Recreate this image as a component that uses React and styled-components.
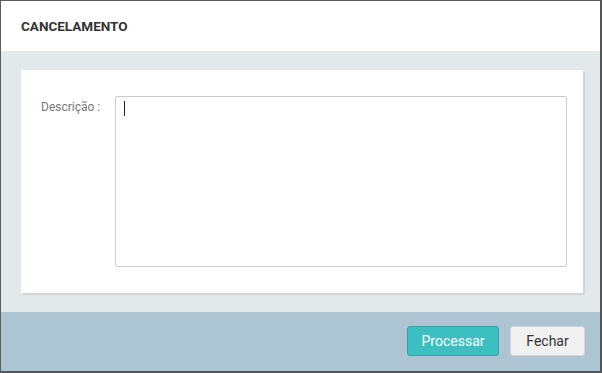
import React from "react";
import styled, { createGlobalStyle } from "styled-components";

const Global = createGlobalStyle`
  html, body {
    margin: 0;
    padding: 0;
    background: #fff;
    font-family: Roboto, "Liberation Sans", Arial, sans-serif;
  }
  * { box-sizing: border-box; }
`;

const Modal = styled.div`
  width: 602px;
  height: 373px;
  display: flex;
  flex-direction: column;
  border-top: 1px solid #5c5c5c;
  border-left: 1px solid #5c5c5c;
  border-right: 2px solid #555;
  border-bottom: 2px solid #555;
  background: #fff;
`;

const Header = styled.div`
  height: 50px;
  flex: none;
  display: flex;
  align-items: center;
  padding: 0 20px;
  background: #fff;
`;

const Title = styled.h4`
  margin: 0;
  font-size: 13.5px;
  font-weight: 700;
  color: #333;
`;

const Body = styled.div`
  flex: 1;
  background: #e3e8eb;
  padding: 19px 17px 17px 20px;
`;

const Card = styled.div`
  height: 223px;
  background: #fff;
  box-shadow: 2px 2px 1px #d0d6da;
  padding: 26px 16px 26px 20px;
`;

const Row = styled.div`
  display: grid;
  grid-template-columns: 74px 1fr;
  align-items: start;
`;

const Label = styled.label`
  font-size: 12px;
  color: #777;
  padding-top: 4px;
`;

const TextArea = styled.div`
  position: relative;
  height: 171px;
  border: 1px solid #ccc;
  border-radius: 2px;
  background: #fff;
`;

const Caret = styled.span`
  position: absolute;
  left: 8px;
  top: 4px;
  width: 1px;
  height: 15px;
  background: #222;
`;

const Footer = styled.div`
  height: 59px;
  flex: none;
  background: #adc5d2;
  display: flex;
  justify-content: flex-end;
  align-items: center;
  gap: 11px;
  padding: 0 15px 2px 0;
`;

const Button = styled.button`
  height: 30px;
  width: ${(p) => p.$w}px;
  border-radius: 3px;
  font-family: Roboto, "Liberation Sans", Arial, sans-serif;
  font-size: 14px;
  cursor: pointer;
  background: ${(p) => (p.$primary ? "#3bbfc0" : "#f1f1f1")};
  border: 1px solid ${(p) => (p.$primary ? "#2ea5a6" : "#d0d6d9")};
  color: ${(p) => (p.$primary ? "#fff" : "#333")};
`;

export default function App() {
  return (
    <>
      <Global />
      <Modal>
        <Header>
          <Title>CANCELAMENTO</Title>
        </Header>
        <Body>
          <Card>
            <Row>
              <Label>Descrição :</Label>
              <TextArea>
                <Caret />
              </TextArea>
            </Row>
          </Card>
        </Body>
        <Footer>
          <Button $primary $w={92}>Processar</Button>
          <Button $w={75}>Fechar</Button>
        </Footer>
      </Modal>
    </>
  );
}
